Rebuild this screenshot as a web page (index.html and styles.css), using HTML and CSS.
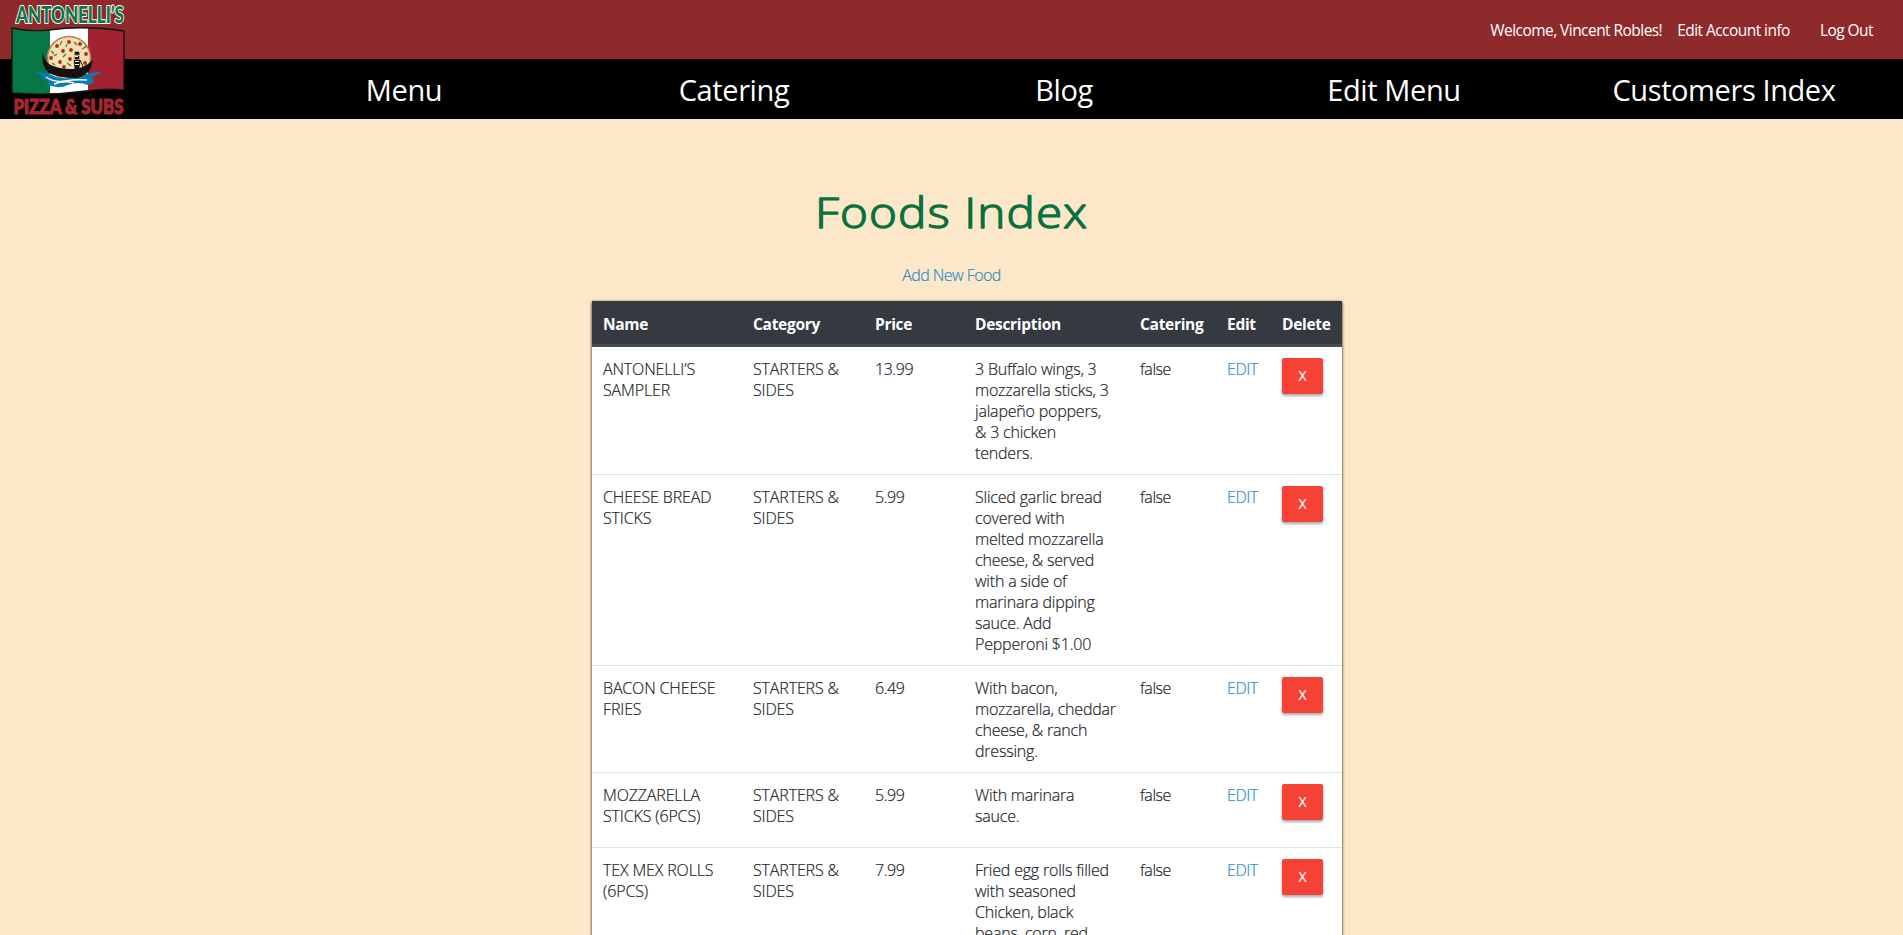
FILE: index.html
```html
<!DOCTYPE html>
<html lang="en">
<head>
<meta charset="utf-8">
<title>Foods Index</title>
<link rel="stylesheet" href="styles.css">
</head>
<body>
<header class="header">
  <div class="account-bar">
    <span class="welcome">Welcome, Vincent Robles!</span>
    <a class="edit-account">Edit Account info</a>
    <a class="logout">Log Out</a>
  </div>
  <nav class="nav">
    <a>Menu</a><a>Catering</a><a>Blog</a><a>Edit Menu</a><a class="nav-customers">Customers Index</a>
  </nav>
  <svg class="logo" viewBox="0 0 140 119" width="140" height="119">
    <text class="logo-name" x="16" y="23" textLength="108" lengthAdjust="spacingAndGlyphs">ANTONELLI’S</text>
    <clipPath id="flag"><path d="M12 28Q30 32 49 30Q84 25 124 31V90Q105 88 86 91Q50 96 12 93Z"/></clipPath>
    <g clip-path="url(#flag)">
      <path fill="#087746" d="M12 25h38v70H12z"/><path fill="#fff" d="M50 25h38v70H50z"/><path fill="#a32231" d="M88 25h37v70H88z"/>
    </g>
    <path d="M12 28Q30 32 49 30Q84 25 124 31V90Q105 88 86 91Q50 96 12 93Z" fill="none" stroke="#17140f" stroke-width="1.3"/>
    <circle cx="69" cy="58" r="21.5" fill="#f3e0ae" stroke="#bd794b" stroke-width="1.6"/>
    <g fill="#a62b2b"><circle cx="57" cy="46" r="1.9"/><circle cx="69" cy="42" r="1.9"/><circle cx="80" cy="44" r="1.9"/><circle cx="63" cy="51" r="1.9"/><circle cx="71" cy="50" r="1.9"/><circle cx="86" cy="54" r="1.9"/><circle cx="51" cy="58" r="1.9"/><circle cx="60" cy="62" r="1.9"/><circle cx="70" cy="59" r="1.9"/><circle cx="64" cy="67" r="1.9"/><circle cx="85" cy="63" r="1.9"/></g>
    <path d="M51 51l3 3M62 41l-2 4M74 42l3 3M66 54l-3 3M82 49l4-2M55 65l-3-2M67 63l4 3M57 54l-3 2M84 48l2-2M66 47l1-3" stroke="#3b8140" stroke-width="1.2"/>
    <path d="M35 73Q43 70 52 75Q61 80 69 78T86 74T102 72Q96 76 91 77Q98 82 88 85Q78 81 68 85Q58 90 46 84Q54 83 42 79Q47 77 35 73Z" fill="#087cac"/>
    <path d="M46 77q9 6 19 4t22 -1M54 84q10-4 20 -1" fill="none" stroke="#fff" stroke-width="1.5"/>
    <path d="M43 52Q43 59 49 64Q58 69 70 69Q82 70 93 60L91 68Q87 76 76 78Q58 78 49 73Q40 65 43 52Z" fill="#17100e"/>
    <path d="M75 52h4v2h-4zM74 54.500h6M75 56h4v3h-4zM74 60h6l-1 9h-4z" fill="#17100e" stroke="#17100e" stroke-width=".6"/>
    <path d="M80 60l4 9" stroke="#17100e"/>
    <path d="M75 56.500h3M75 61.500h4M75 64.500h4" stroke="#fff" stroke-width="1.1"/>
    <text class="logo-sub" x="13.500" y="113.500" textLength="110" lengthAdjust="spacingAndGlyphs">PIZZA &amp; SUBS</text>
  </svg>
</header>
<main class="main">
  <h1 class="title"><svg width="290" height="60" viewBox="0 0 290 60"><text x="8" y="46" textLength="273" lengthAdjust="spacingAndGlyphs">Foods Index</text></svg></h1>
  <a class="add">Add New Food</a>
  <table class="foods">
    <colgroup><col class="c-name"><col class="c-cat"><col class="c-price"><col class="c-desc"><col class="c-catering"><col class="c-edit"><col class="c-del"></colgroup>
    <thead><tr><th>Name</th><th>Category</th><th>Price</th><th>Description</th><th>Catering</th><th>Edit</th><th>Delete</th></tr></thead>
    <tbody>
      <tr><td class="caps">ANTONELLI’S<br>SAMPLER</td><td class="caps">STARTERS &amp;<br>SIDES</td><td class="tight">13.99</td><td>3 Buffalo wings, 3<br>mozzarella sticks, 3<br>jalapeño poppers,<br>&amp; 3 chicken<br>tenders.</td><td class="tight">false</td><td class="tight"><a class="edit">EDIT</a></td><td><button class="del">X</button></td></tr>
      <tr><td class="caps">CHEESE BREAD<br>STICKS</td><td class="caps">STARTERS &amp;<br>SIDES</td><td class="tight">5.99</td><td>Sliced garlic bread<br>covered with<br>melted mozzarella<br>cheese, &amp; served<br>with a side of<br>marinara dipping<br>sauce. Add<br>Pepperoni $1.00</td><td class="tight">false</td><td class="tight"><a class="edit">EDIT</a></td><td><button class="del">X</button></td></tr>
      <tr><td class="caps">BACON CHEESE<br>FRIES</td><td class="caps">STARTERS &amp;<br>SIDES</td><td class="tight">6.49</td><td>With bacon,<br>mozzarella, cheddar<br>cheese, &amp; ranch<br>dressing.</td><td class="tight">false</td><td class="tight"><a class="edit">EDIT</a></td><td><button class="del">X</button></td></tr>
      <tr><td class="caps">MOZZARELLA<br>STICKS (6PCS)</td><td class="caps">STARTERS &amp;<br>SIDES</td><td class="tight">5.99</td><td>With marinara<br>sauce.</td><td class="tight">false</td><td class="tight"><a class="edit">EDIT</a></td><td><button class="del">X</button></td></tr>
      <tr><td class="caps">TEX MEX ROLLS<br>(6PCS)</td><td class="caps">STARTERS &amp;<br>SIDES</td><td class="tight">7.99</td><td>Fried egg rolls filled<br>with seasoned<br>Chicken, black<br>beans, corn, red</td><td class="tight">false</td><td class="tight"><a class="edit">EDIT</a></td><td><button class="del">X</button></td></tr>
    </tbody>
  </table>
</main>
</body>
</html>
```
FILE: styles.css
```css
* { box-sizing: border-box; }
body {
  margin: 0;
  height: 935px;
  overflow: hidden;
  background: #fce8c9;
  color: #212529;
  font: 340 16px/21px "Open Sans", "Noto Sans", sans-serif;
}
.header { position: relative; color: #fff; }
.account-bar {
  display: flex;
  justify-content: flex-end;
  align-items: center;
  height: 59px;
  padding: 1px 30px 0 0;
  background: #8f2a2c;
  font-size: 15.5px;
  font-weight: 400;
  letter-spacing: -0.55px;
}
.edit-account { margin: 0 30px 0 15px; }
.nav {
  display: grid;
  grid-template-columns: repeat(5, 1fr);
  align-items: center;
  height: 60px;
  padding: 1px 14px 0 239px;
  background: #000;
  font-size: 29px;
  font-weight: 400;
  line-height: 40px;
  text-align: center;
  letter-spacing: -0.4px;
}
.logo { position: absolute; left: 0; top: 0; overflow: visible; }
.logo-name {
  font: 900 22px/1 Lato, sans-serif;
  fill: #087746;
  stroke: #fff;
  stroke-width: 2px;
  stroke-linejoin: round;
  paint-order: stroke;
}
.logo-sub {
  font: 900 21px/1 Lato, sans-serif;
  fill: #a52631;
  stroke: #a52631;
  stroke-width: 1.2px;
}
.main { display: flex; flex-direction: column; }
.title { margin: 63px 0 0 807px; height: 60px; }
.title svg { display: block; }
.title text {
  font: 300 43px "Open Sans", sans-serif;
  letter-spacing: 1px;
  fill: #08713f;
  stroke: #08713f;
  stroke-width: 1.4px;
  stroke-linejoin: round;
}
.add {
  margin-top: 23px;
  text-align: center;
  color: #2b8cd0;
  letter-spacing: -0.55px;
  -webkit-text-stroke: 0.2px;
}
.foods {
  width: 750px;
  margin: 15px 0 0 592px;
  table-layout: fixed;
  border-spacing: 0;
  background: #fff;
  box-shadow: 0 1px 3px rgba(0, 0, 0, .9);
}
.c-name { width: 150px; }
.c-cat { width: 122px; }
.c-price { width: 100px; }
.c-desc { width: 165px; }
.c-catering { width: 87px; }
.c-edit { width: 55px; }
.c-del { width: 71px; }
th {
  height: 45px;
  padding: 3px 0 0 11px;
  background: #343a40;
  border-bottom: 2px solid #454d55;
  color: #fff;
  font-size: 15.5px;
  font-weight: 700;
  text-align: left;
  letter-spacing: -0.3px;
}
td {
  padding: 12px 0 10px 11px;
  border-top: 1px solid #dee2e6;
  vertical-align: top;
  white-space: nowrap;
  letter-spacing: -0.2px;
  -webkit-text-stroke: 0.2px;
}
.caps { letter-spacing: -0.15px; }
.tight { letter-spacing: -0.45px; }
tbody tr:first-child td { border-top-color: #454d55; }
.edit { color: #2b8cd0; }
.del {
  display: block;
  width: 41px;
  height: 36px;
  margin: -1px 0 17px;
  padding: 0 0 1px;
  border: 0;
  border-radius: 2px;
  background: #f44336;
  color: #fff;
  font: 400 14px "Open Sans", sans-serif;
  box-shadow: 0 2px 3px rgba(0, 0, 0, .35);
}
```
